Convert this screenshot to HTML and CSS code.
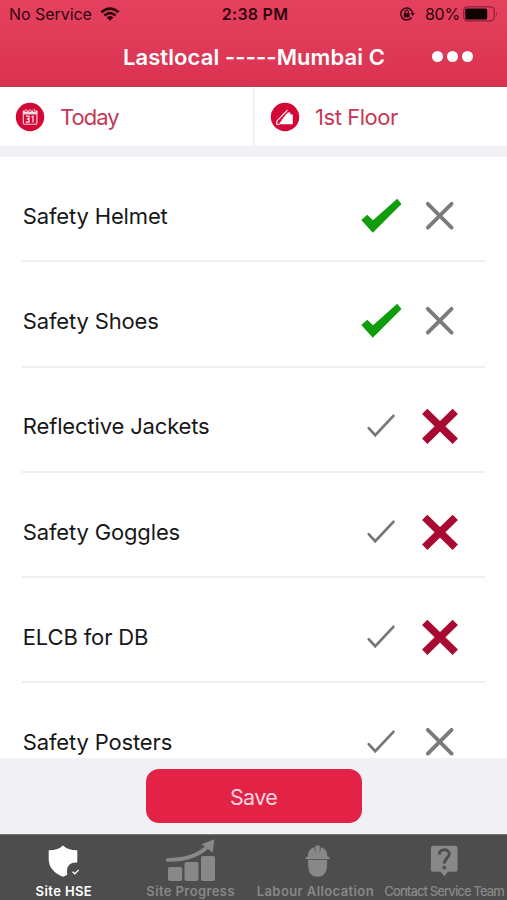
FILE: index.html
```html
<!DOCTYPE html>
<html lang="en">
<head>
<meta charset="utf-8">
<title>Site HSE</title>
<link rel="stylesheet" href="styles.css">
</head>
<body>
<svg class="defs" width="0" height="0">
  <symbol id="yes-on" viewBox="0 0 48 48"><path d="M4.3 28 10.3 22.7 16 28.2 40.2 6.8 44.5 12 15.8 40.8Z" fill="#119c0d"/></symbol>
  <symbol id="yes-off" viewBox="0 0 48 48"><path d="M11.7 26.2 18.2 33.2 36.4 13.8" fill="none" stroke="#777" stroke-width="2.7" stroke-linecap="round"/></symbol>
  <symbol id="no-on" viewBox="0 0 48 48"><path d="M8.7 9.4 39.3 39.2M39.3 9.4 8.7 39.2" fill="none" stroke="#a90a32" stroke-width="7.6"/></symbol>
  <symbol id="no-off" viewBox="0 0 48 48"><path d="M11.8 11.8 35.6 35.6M35.6 11.8 11.8 35.6" fill="none" stroke="#7b7b7b" stroke-width="3.8" stroke-linecap="round"/></symbol>
</svg>
<div class="screen">
  <header class="header">
    <div class="status">
      <div class="status-left">
        <span class="carrier">No Service</span>
        <svg class="wifi" width="20" height="14" viewBox="0 0 20 14"><g fill="none" stroke="#32060f" stroke-width="2.7"><path d="M1.4 5.2Q10-2 18.6 5.2"/><path d="M4.4 8.5Q10 3.8 15.6 8.5"/></g><path d="M6.6 10.4Q10 7.6 13.4 10.4L10 13.8Z" fill="#32060f"/></svg>
      </div>
      <span class="clock">2:38 PM</span>
      <div class="status-right">
        <svg width="16" height="16" viewBox="0 0 16 16"><path d="M12.6 11.5A6 6 0 1 1 13.7 7.4" fill="none" stroke="#32060f" stroke-width="1.4"/><path d="M11.6 7H15.8L13.7 10Z" fill="#32060f"/><rect x="4.7" y="7" width="6" height="4.4" rx=".6" fill="#32060f"/><path d="M6 7.2V5.8a1.7 1.7 0 0 1 3.4 0V7.2" fill="none" stroke="#32060f" stroke-width="1.2"/></svg>
        <span class="percent">80%</span>
        <svg width="36" height="16" viewBox="0 0 36 16"><rect x=".7" y=".9" width="30.6" height="14" rx="3.6" fill="none" stroke="#8c2038" stroke-width="1.2"/><rect x="2.2" y="2.4" width="22" height="11" rx="1.6" fill="#100205"/><path d="M33 5.6Q34.8 8 33 10.4Z" fill="#8c2038"/></svg>
      </div>
    </div>
    <div class="titlebar">
      <h1 class="title">Lastlocal -----Mumbai C</h1>
      <div class="more"><i></i><i></i><i></i></div>
    </div>
  </header>
  <div class="filters">
    <div class="filter">
      <svg width="30" height="30" viewBox="0 0 30 30"><circle cx="15" cy="15" r="14.2" fill="#d30837"/><path d="M8.3 9.2H21.9V20.8Q21.9 22.2 20.5 22.2H9.7Q8.3 22.2 8.3 20.8Z" fill="none" stroke="#ffdbe4" stroke-width="1.1"/><path d="M8 8.7H22.2V12.4H8Z" fill="#ffdbe4"/><path d="M11 7.3V10M15.1 7.3V10M19.2 7.3V10" stroke="#d30837" stroke-width="2.2"/><path d="M11 7V9.6M15.1 7V9.6M19.2 7V9.6" stroke="#ffdbe4" stroke-width="1"/><path d="M10.8 14.2H14V20H10.8M11.8 17H14M16.5 14.8 18 14.2V20.5" fill="none" stroke="#ffdbe4" stroke-width="1.3"/></svg>
      <span class="filter-text today">Today</span>
    </div>
    <div class="filter">
      <svg width="30" height="30" viewBox="0 0 30 30"><circle cx="15" cy="15" r="14.2" fill="#d30837"/><path d="M22.8 22.2H9.8V20.2L11.6 19V17.6L13.4 16.6V15L15.3 14V12.5L17.4 11.6V10.6H20.4V12.6H22.8Z" fill="#fff"/><path d="M10 22.2H6.8V19.2L17.4 8.2" fill="none" stroke="#fff" stroke-width="1.1"/></svg>
      <span class="filter-text floor">1st Floor</span>
    </div>
  </div>
  <main class="list">
    <div class="row"><span class="name">Safety Helmet</span><svg class="mark"><use href="#yes-on"/></svg><svg class="mark"><use href="#no-off"/></svg></div>
    <div class="row"><span class="name">Safety Shoes</span><svg class="mark"><use href="#yes-on"/></svg><svg class="mark"><use href="#no-off"/></svg></div>
    <div class="row"><span class="name">Reflective Jackets</span><svg class="mark"><use href="#yes-off"/></svg><svg class="mark"><use href="#no-on"/></svg></div>
    <div class="row"><span class="name">Safety Goggles</span><svg class="mark"><use href="#yes-off"/></svg><svg class="mark"><use href="#no-on"/></svg></div>
    <div class="row"><span class="name">ELCB for DB</span><svg class="mark"><use href="#yes-off"/></svg><svg class="mark"><use href="#no-on"/></svg></div>
    <div class="row"><span class="name">Safety Posters</span><svg class="mark"><use href="#yes-off"/></svg><svg class="mark"><use href="#no-off"/></svg></div>
  </main>
  <div class="actions"><button class="save">Save</button></div>
  <nav class="tabs">
    <div class="tab active">
      <svg width="52" height="46" viewBox="0 0 52 46"><path d="M26 10.5Q31 15.4 40.3 15.2V27.6Q30 27 30 36.5Q30 38.5 30.4 39.4Q28 41.3 26 41.7Q11.7 36 11.7 24V15.2Q21 15.4 26 10.5Z" fill="#fff"/><path d="M35.5 36.8 37.8 38.8 41.8 34.9" fill="none" stroke="#fff" stroke-width="1.3"/></svg>
      <span class="label hse">Site HSE</span>
    </div>
    <div class="tab">
      <svg width="52" height="46" viewBox="0 0 52 46"><g fill="#888"><rect x="4" y="32" width="14.2" height="14" rx="2"/><rect x="20.5" y="27" width="14" height="19" rx="2"/><rect x="37" y="21" width="14" height="25" rx="2"/><path d="M37.5 9.2 50.4 4.2 48.7 17.5Z"/></g><path d="M3.7 24.8Q29 25.5 44.5 11" fill="none" stroke="#888" stroke-width="3.8" stroke-linecap="round"/></svg>
      <span class="label progress">Site Progress</span>
    </div>
    <div class="tab">
      <svg width="52" height="46" viewBox="0 0 52 46"><g fill="#888"><path d="M17.1 25H36.1V29Q36.1 41.8 26.6 41.8Q17.1 41.8 17.1 29Z"/><path d="M16.8 21.5Q16.8 14.5 23.2 12L24.4 18.5V11Q26.6 9.5 28.8 11V18.5L30 12Q36.4 14.5 36.4 21.5L38.5 22.2V24.2H14.7V22.2Z"/></g></svg>
      <span class="label labour">Labour Allocation</span>
    </div>
    <div class="tab">
      <svg width="52" height="46" viewBox="0 0 52 46"><path d="M15.5 10.7H37Q39.6 10.7 39.6 13.3V34.2Q39.6 36.8 37 36.8H30L26.3 41.3 22.6 36.8H15.5Q12.9 36.8 12.9 34.2V13.3Q12.9 10.7 15.5 10.7Z" fill="#888"/><path d="M21.3 19.4C21.3 13.2 31.3 13.4 31.3 19C31.3 22.6 26.3 23.2 26.3 28.6" fill="none" stroke="#4d4d4d" stroke-width="3"/><circle cx="26.3" cy="32.6" r="1.8" fill="#4d4d4d"/></svg>
      <span class="label contact">Contact Service Team</span>
    </div>
  </nav>
</div>
</body>
</html>
```
FILE: styles.css
```css
* { box-sizing: border-box; }
body { margin: 0; font-family: Inter, "Liberation Sans", sans-serif; color: #171719; }
svg { display: block; flex: none; }
.defs { display: none; }
.screen { width: 507px; height: 900px; display: flex; flex-direction: column; overflow: hidden; background: #fff; white-space: nowrap; }
.header { height: 87px; flex: none; background: linear-gradient(#e5415f, #da3351); border-bottom: 1px solid #c03c54; }
.status { height: 28px; display: grid; grid-template-columns: 1fr auto 1fr; align-items: center; padding: 0 8px 0 9px; color: #32060f; font-size: 16px; }
.status-left, .status-right { display: flex; align-items: center; }
.status-left { gap: 8px; }
.status-right { justify-content: flex-end; }
.carrier { letter-spacing: -.05px; }
.clock { font-weight: 600; letter-spacing: .25px; padding-left: 2px; }
.percent { margin: 0 3px 0 10px; letter-spacing: -.2px; }
.titlebar { height: 57px; display: grid; grid-template-columns: 1fr auto 1fr; align-items: center; padding: 0 34px; }
.title { grid-column: 2; margin: 0; padding-left: 1px; color: #fff; font-size: 22px; font-weight: 600; letter-spacing: .1px; }
.more { display: flex; gap: 4px; justify-content: flex-end; }
.more i { width: 11px; height: 11px; border-radius: 50%; background: #fff; }
.filters { height: 70px; flex: none; display: grid; grid-template-columns: 253px 1fr; border-bottom: 11px solid #f1f1f5; }
.filter { display: flex; align-items: center; gap: 15px; padding-left: 15px; }
.filter + .filter { border-left: 2px solid #f1f1f5; }
.filter-text { color: #c53855; font-size: 22px; }
.today { letter-spacing: -1px; }
.floor { letter-spacing: -.45px; }
.list { flex: 1; min-height: 0; overflow: hidden; }
.row { height: 105.3px; margin: 0 22px; padding: 14px 21px 0 .8px; border-bottom: 2px solid #efefef; display: flex; align-items: center; gap: 11px; }
.name { flex: 1; font-size: 22px; letter-spacing: -.15px; }
.mark { width: 48px; height: 48px; }
.actions { height: 76px; flex: none; padding-top: 11px; display: flex; justify-content: center; background: #f1f1f5; }
.save { width: 216px; height: 54px; border: 0; border-radius: 13px; background: #e22346; color: #ffd5df; font: 21.5px Inter, sans-serif; letter-spacing: -.7px; padding: 2px 0 0; }
.tabs { height: 66px; flex: none; display: grid; grid-template-columns: repeat(4, 126.75px); background: #4d4d4d; border-top: 1px solid #777; }
.tab { display: flex; flex-direction: column; align-items: center; color: #888; }
.label { font-size: 13px; line-height: 20px; font-weight: 600; }
.hse, .progress { letter-spacing: .4px; padding-left: 1px; }
.labour { letter-spacing: .4px; margin-right: 3px; }
.contact { letter-spacing: -.88px; font-weight: 500; padding-left: 1px; }
.active { color: #fff; }
```
